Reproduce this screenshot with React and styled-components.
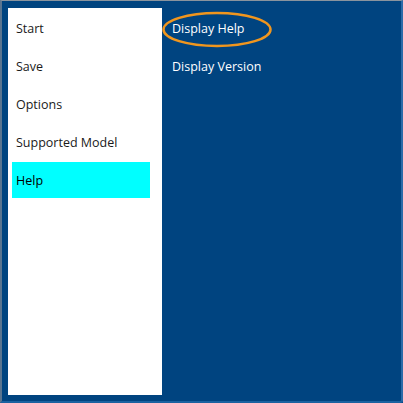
import React from "react";
import styled, { createGlobalStyle } from "styled-components";

const GlobalStyle = createGlobalStyle`
  html, body {
    margin: 0;
    padding: 0;
    background: #004480;
  }
  body {
    font-family: "Open Sans", "Noto Sans", "Liberation Sans", sans-serif;
  }
`;

const Window = styled.div`
  width: 403px;
  height: 403px;
  box-sizing: border-box;
  background-color: #004480;
  border-top: 1px solid #8a949e;
  border-left: 2px solid #5a7590;
  border-right: 2px solid #2a6aa8;
  border-bottom: 2px solid #1a62a0;
  border-radius: 0 0 3px 0;
  padding: 7px 0 6px 6px;
  display: flex;
`;

const Sidebar = styled.div`
  width: 154px;
  background-color: #ffffff;
  padding: 2px 4px;
  box-sizing: border-box;
  display: flex;
  flex-direction: column;
  gap: 2px;
`;

const MenuItem = styled.div`
  height: 36px;
  width: 138px;
  display: flex;
  align-items: center;
  padding-left: 4px;
  box-sizing: border-box;
  font-size: 12.5px;
  color: ${(p) => (p.$active ? "#000000" : "#1a1a1a")};
  background-color: ${(p) => (p.$active ? "#00ffff" : "transparent")};
`;

const Content = styled.div`
  flex: 1;
  position: relative;
  padding: 2px 0 0 6px;
  display: flex;
  flex-direction: column;
  gap: 2px;
`;

const SubItem = styled.div`
  height: 36px;
  display: flex;
  align-items: center;
  padding-left: 4px;
  font-size: 12.5px;
  color: #ffffff;
`;

const Highlight = styled.svg`
  position: absolute;
  left: 0;
  top: 3px;
  pointer-events: none;
`;

const menu = ["Start", "Save", "Options", "Supported Model", "Help"];

export default function App() {
  return (
    <>
      <GlobalStyle />
      <Window>
        <Sidebar>
          {menu.map((m) => (
            <MenuItem key={m} $active={m === "Help"}>
              {m}
            </MenuItem>
          ))}
        </Sidebar>
        <Content>
          <SubItem>Display Help</SubItem>
          <SubItem>Display Version</SubItem>
          <Highlight width="112" height="38" viewBox="0 0 112 38">
            <ellipse
              cx="55"
              cy="18.5"
              rx="53.5"
              ry="16.5"
              fill="none"
              stroke="#f0961e"
              strokeWidth="2.5"
            />
          </Highlight>
        </Content>
      </Window>
    </>
  );
}
